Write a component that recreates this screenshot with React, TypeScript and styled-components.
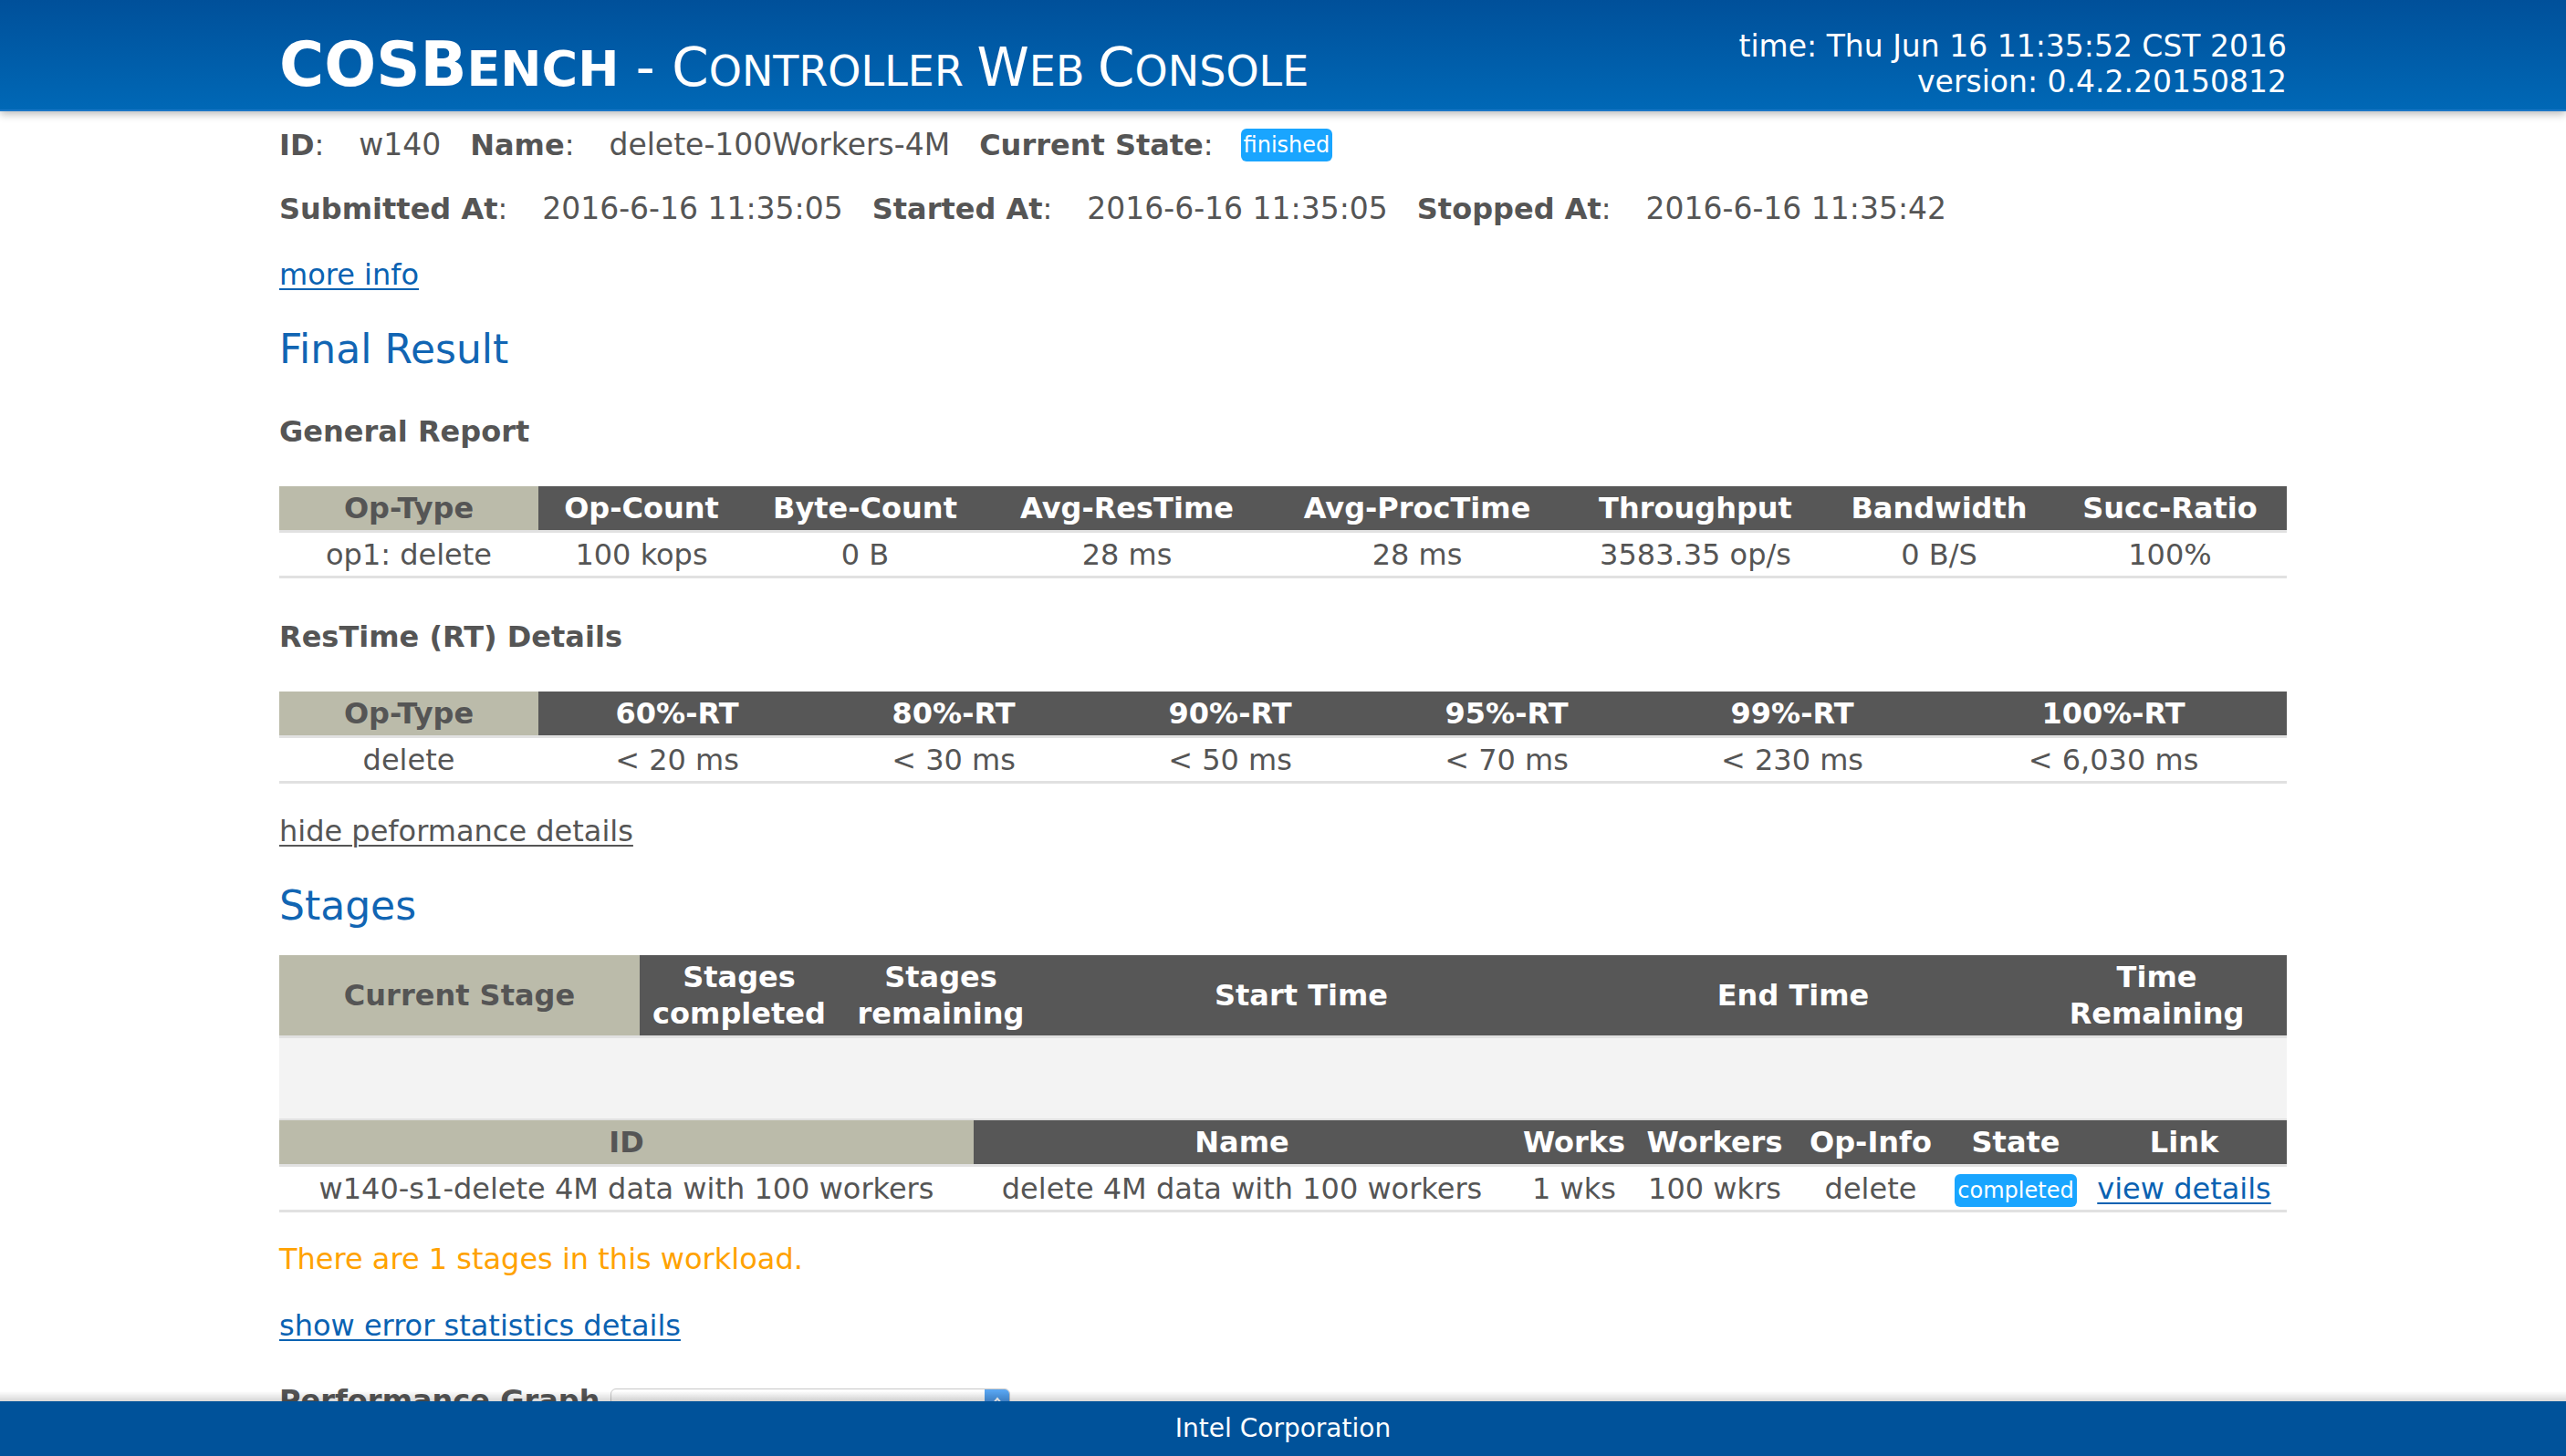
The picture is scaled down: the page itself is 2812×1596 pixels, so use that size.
import React from "react";
import styled, { createGlobalStyle } from "styled-components";

const GlobalStyle = createGlobalStyle`
  html, body {
    margin: 0;
    padding: 0;
    background: #ffffff;
  }
  body {
    font-family: "DejaVu Sans", Verdana, sans-serif;
    font-size: 32px;
    color: #555555;
  }
`;

type Cell = { text: React.ReactNode };

const generalHead = [
  "Op-Type",
  "Op-Count",
  "Byte-Count",
  "Avg-ResTime",
  "Avg-ProcTime",
  "Throughput",
  "Bandwidth",
  "Succ-Ratio",
];
const generalRow = [
  "op1: delete",
  "100 kops",
  "0 B",
  "28 ms",
  "28 ms",
  "3583.35 op/s",
  "0 B/S",
  "100%",
];
const generalCols = [284, 226, 264, 310, 326, 284, 250, 256];

const rtHead = ["Op-Type", "60%-RT", "80%-RT", "90%-RT", "95%-RT", "99%-RT", "100%-RT"];
const rtRow = ["delete", "< 20 ms", "< 30 ms", "< 50 ms", "< 70 ms", "< 230 ms", "< 6,030 ms"];
const rtCols = [284, 304, 302, 304, 302, 324, 380];

const stageHead: React.ReactNode[] = [
  "Current Stage",
  <>Stages<br />completed</>,
  <>Stages<br />remaining</>,
  "Start Time",
  "End Time",
  <>Time<br />Remaining</>,
];
const stageCols = [395, 218, 224, 566, 512, 285];

const listHead = ["ID", "Name", "Works", "Workers", "Op-Info", "State", "Link"];
const listCols = [761, 588, 140, 168, 174, 144, 225];

const Header = styled.header`
  position: relative;
  z-index: 2;
  height: 120px;
  background: linear-gradient(#00509a, #0068b6);
  border-bottom: 2px solid #1b76c6;
  box-shadow: 0 3px 9px rgba(0, 0, 0, 0.28);
`;

const HeaderInner = styled.div`
  width: 2200px;
  margin: 0 auto;
  display: flex;
  justify-content: space-between;
  align-items: flex-start;
  color: #ffffff;
`;

const Title = styled.h1`
  margin: 0;
  padding-top: 37px;
  line-height: 68px;
  font-weight: normal;
  white-space: nowrap;
  text-transform: uppercase;
`;

const Brand = styled.span`
  font-weight: bold;
  font-size: 67px;
`;

const Part = styled.span<{ $size: number }>`
  font-size: ${(p) => p.$size}px;
`;

const Meta = styled.div`
  padding-top: 31px;
  text-align: right;
  font-size: 33px;
  line-height: 39px;
`;

const Main = styled.main`
  width: 2200px;
  margin: 0 auto;
  padding-top: 17px;
  padding-bottom: 120px;
`;

const InfoRow = styled.div<{ $mt?: number }>`
  display: flex;
  align-items: center;
  height: 40px;
  line-height: 40px;
  margin-top: ${(p) => p.$mt ?? 0}px;
  white-space: nowrap;
`;

const Field = styled.span`
  display: inline-flex;
  align-items: center;
  margin-right: 32px;
`;

const Label = styled.b`
  font-weight: bold;
`;

const Value = styled.span`
  margin-left: 38px;
  font-size: 33px;
`;

const Badge = styled.span`
  display: inline-block;
  margin-left: 30px;
  padding: 0 3px;
  height: 36px;
  line-height: 36px;
  font-size: 24px;
  color: #ffffff;
  background: #19a5ff;
  border-radius: 6px;
`;

const TextLink = styled.a<{ $mt?: number; $gray?: boolean }>`
  display: inline-block;
  margin-top: ${(p) => p.$mt ?? 0}px;
  line-height: 40px;
  color: ${(p) => (p.$gray ? "#555555" : "#0a62b2")};
  text-decoration: underline;
  text-underline-offset: 4px;
  text-decoration-thickness: 2px;
  cursor: pointer;
`;

const Block = styled.div``;

const Heading = styled.h2<{ $mt: number }>`
  margin: ${(p) => p.$mt}px 0 0;
  font-size: 44px;
  line-height: 56px;
  font-weight: normal;
  color: #1165b3;
`;

const SubHeading = styled.h3<{ $mt: number }>`
  margin: ${(p) => p.$mt}px 0 0;
  font-size: 32px;
  line-height: 40px;
  font-weight: bold;
  color: #555555;
`;

const Table = styled.table<{ $mt?: number }>`
  width: 100%;
  margin-top: ${(p) => p.$mt ?? 0}px;
  table-layout: fixed;
  border-collapse: collapse;
  border-spacing: 0;
`;

const Th = styled.th<{ $key?: boolean; $h?: number }>`
  height: ${(p) => p.$h ?? 48}px;
  padding: 0;
  font-size: 32px;
  line-height: 40px;
  font-weight: bold;
  text-align: center;
  white-space: nowrap;
  color: ${(p) => (p.$key ? "#555555" : "#ffffff")};
  background: ${(p) => (p.$key ? "#bbbbaa" : "#575757")};
  border-bottom: 3px solid #e1e1e1;
`;

const Td = styled.td`
  height: 47px;
  padding: 0;
  font-size: 32px;
  line-height: 40px;
  text-align: center;
  white-space: nowrap;
  color: #555555;
  border-bottom: 3px solid #e1e1e1;
`;

const EmptyRow = styled.td`
  height: 88px;
  padding: 0;
  background: #f3f3f3;
  border-bottom: 2px solid #e1e1e1;
`;

const CellBadge = styled(Badge)`
  margin-left: 0;
`;

const Notice = styled.div<{ $mt: number }>`
  margin-top: ${(p) => p.$mt}px;
  line-height: 40px;
  color: #ffa200;
`;

const GraphRow = styled.div`
  display: flex;
  align-items: flex-start;
  margin-top: 42px;
  gap: 12px;
`;

const SelectBox = styled.div`
  display: flex;
  justify-content: flex-end;
  width: 438px;
  height: 38px;
  margin-top: 7px;
  box-sizing: border-box;
  border: 1px solid #c8c8c8;
  border-radius: 6px;
  background: linear-gradient(#ffffff, #ececec);
  overflow: hidden;
`;

const SelectButton = styled.span`
  display: flex;
  align-items: flex-start;
  justify-content: center;
  width: 27px;
  padding-top: 8px;
  background: linear-gradient(#5aa6f0, #2f7fdc);
`;

const Footer = styled.footer`
  position: fixed;
  left: 0;
  right: 0;
  bottom: 0;
  height: 60px;
  background: #00529a;
  color: #ffffff;
  font-size: 28px;
  line-height: 60px;
  text-align: center;

  &::before {
    content: "";
    position: absolute;
    left: 0;
    right: 0;
    top: -11px;
    height: 11px;
    background: linear-gradient(rgba(0, 0, 0, 0), rgba(0, 0, 0, 0.16));
  }
`;

const Cols: React.FC<{ widths: number[] }> = ({ widths }) => (
  <colgroup>
    {widths.map((w, i) => (
      <col key={i} style={{ width: w }} />
    ))}
  </colgroup>
);

const SimpleTable: React.FC<{
  head: React.ReactNode[];
  row: Cell[];
  widths: number[];
  mt: number;
}> = ({ head, row, widths, mt }) => (
  <Table $mt={mt}>
    <Cols widths={widths} />
    <thead>
      <tr>
        {head.map((h, i) => (
          <Th key={i} $key={i === 0}>
            {h}
          </Th>
        ))}
      </tr>
    </thead>
    <tbody>
      <tr>
        {row.map((c, i) => (
          <Td key={i}>{c.text}</Td>
        ))}
      </tr>
    </tbody>
  </Table>
);

const toCells = (arr: string[]): Cell[] => arr.map((t) => ({ text: t }));

const App: React.FC = () => {
  return (
    <>
      <GlobalStyle />
      <Header>
        <HeaderInner>
          <Title>
            <Brand>
              COSB<Part $size={54}>ench</Part>
            </Brand>
            <Part $size={58}> - C</Part>
            <Part $size={46}>ontroller </Part>
            <Part $size={58}>W</Part>
            <Part $size={46}>eb </Part>
            <Part $size={58}>C</Part>
            <Part $size={46}>onsole</Part>
          </Title>
          <Meta>
            <div>time: Thu Jun 16 11:35:52 CST 2016</div>
            <div>version: 0.4.2.20150812</div>
          </Meta>
        </HeaderInner>
      </Header>

      <Main>
        <InfoRow>
          <Field>
            <Label>ID</Label>:<Value>w140</Value>
          </Field>
          <Field>
            <Label>Name</Label>:<Value>delete-100Workers-4M</Value>
          </Field>
          <Field>
            <Label>Current State</Label>:<Badge>finished</Badge>
          </Field>
        </InfoRow>
        <InfoRow $mt={30}>
          <Field>
            <Label>Submitted At</Label>:<Value>2016-6-16 11:35:05</Value>
          </Field>
          <Field>
            <Label>Started At</Label>:<Value>2016-6-16 11:35:05</Value>
          </Field>
          <Field>
            <Label>Stopped At</Label>:<Value>2016-6-16 11:35:42</Value>
          </Field>
        </InfoRow>
        <Block>
          <TextLink $mt={32}>more info</TextLink>
        </Block>

        <Heading $mt={34}>Final Result</Heading>
        <SubHeading $mt={42}>General Report</SubHeading>
        <SimpleTable head={generalHead} row={toCells(generalRow)} widths={generalCols} mt={40} />

        <SubHeading $mt={44}>ResTime (RT) Details</SubHeading>
        <SimpleTable head={rtHead} row={toCells(rtRow)} widths={rtCols} mt={40} />

        <Block>
          <TextLink $mt={32} $gray>
            hide peformance details
          </TextLink>
        </Block>

        <Heading $mt={34}>Stages</Heading>
        <Table $mt={26}>
          <Cols widths={stageCols} />
          <thead>
            <tr>
              {stageHead.map((h, i) => (
                <Th key={i} $key={i === 0} $h={88}>
                  {h}
                </Th>
              ))}
            </tr>
          </thead>
          <tbody>
            <tr>
              <EmptyRow colSpan={6} />
            </tr>
          </tbody>
        </Table>
        <Table>
          <Cols widths={listCols} />
          <thead>
            <tr>
              {listHead.map((h, i) => (
                <Th key={i} $key={i === 0}>
                  {h}
                </Th>
              ))}
            </tr>
          </thead>
          <tbody>
            <tr>
              <Td>w140-s1-delete 4M data with 100 workers</Td>
              <Td>delete 4M data with 100 workers</Td>
              <Td>1 wks</Td>
              <Td>100 wkrs</Td>
              <Td>delete</Td>
              <Td>
                <CellBadge>completed</CellBadge>
              </Td>
              <Td>
                <TextLink>view details</TextLink>
              </Td>
            </tr>
          </tbody>
        </Table>

        <Notice $mt={31}>There are 1 stages in this workload.</Notice>
        <Block>
          <TextLink $mt={33}>show error statistics details</TextLink>
        </Block>

        <GraphRow>
          <SubHeading $mt={0}>Performance Graph</SubHeading>
          <SelectBox>
            <SelectButton>
              <svg width="14" height="10" viewBox="0 0 14 10" fill="none">
                <path d="M2 8 L7 2 L12 8" stroke="#ffffff" strokeWidth="2" />
              </svg>
            </SelectButton>
          </SelectBox>
        </GraphRow>
      </Main>

      <Footer>Intel Corporation</Footer>
    </>
  );
};

export default App;
